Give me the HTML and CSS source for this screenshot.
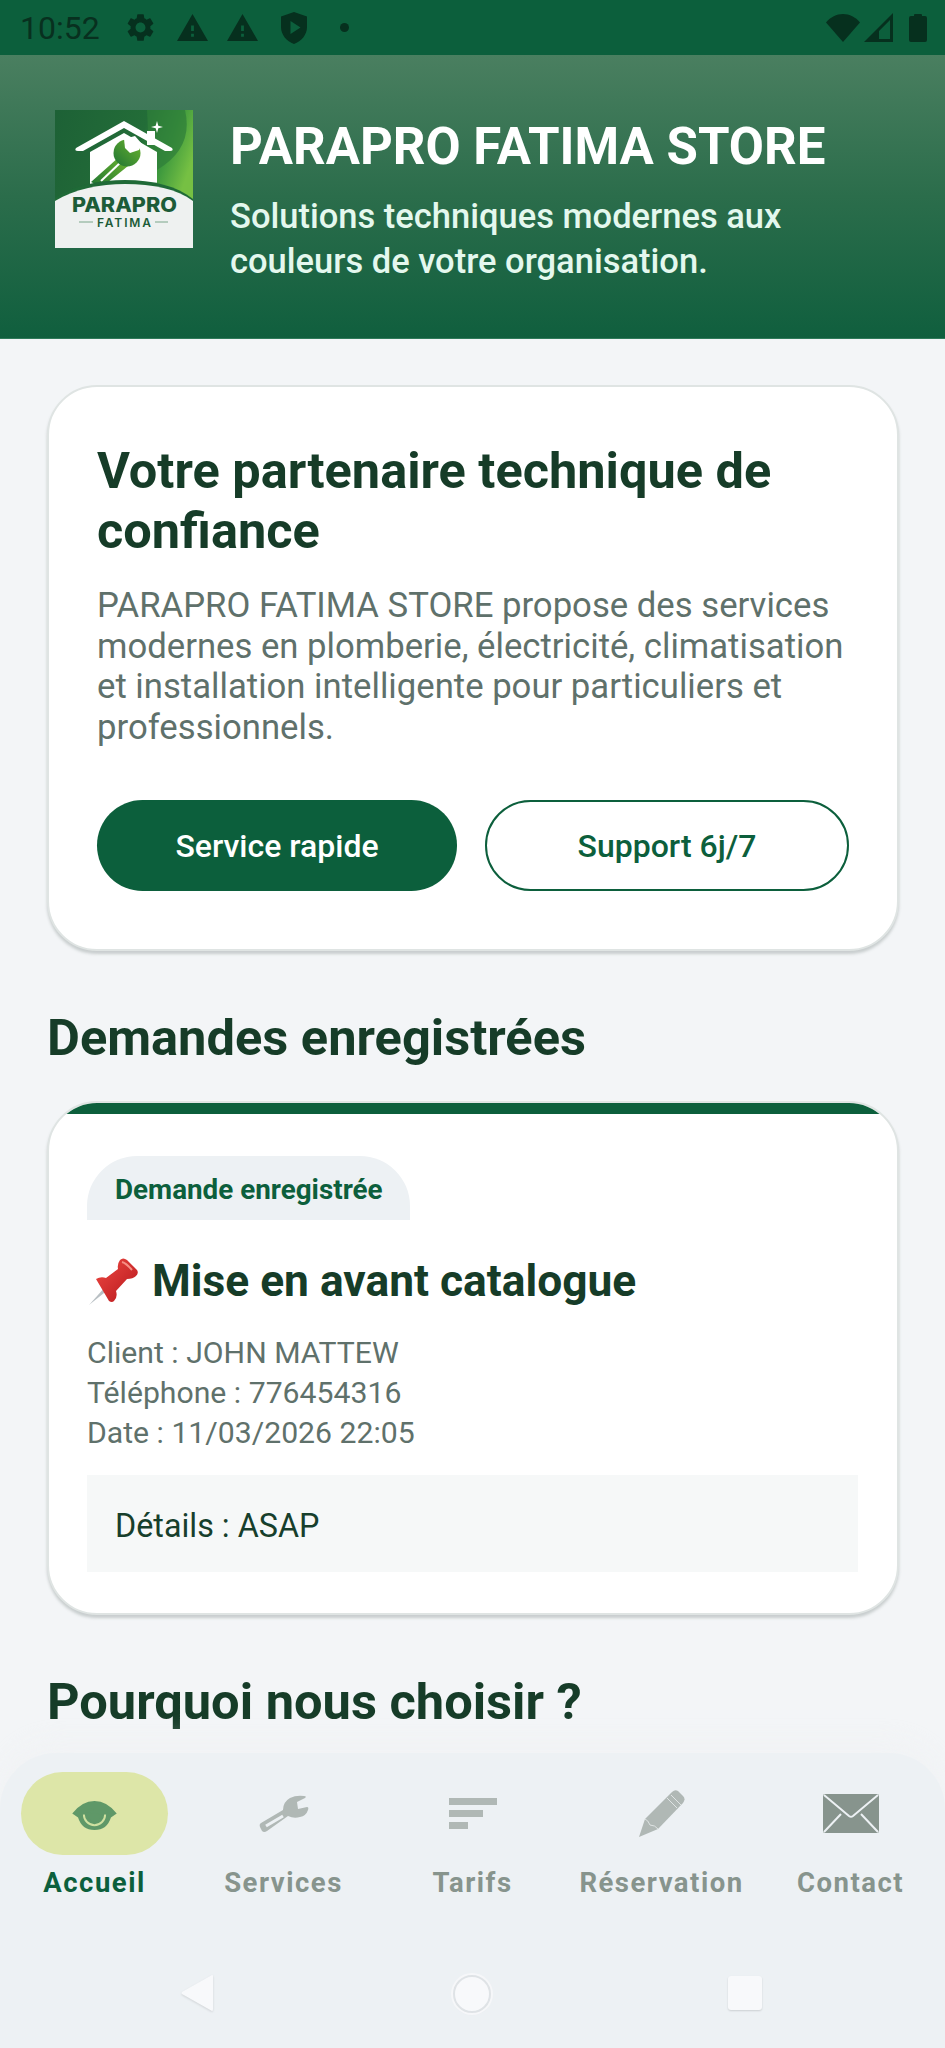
FILE: index.html
```html
<!DOCTYPE html>
<html lang="fr">
<head>
<meta charset="utf-8">
<title>PARAPRO FATIMA STORE</title>
<link rel="stylesheet" href="styles.css">
</head>
<body>
<div class="app">
  <div class="status">
    <span class="time">10:52</span>
    <svg class="si gear" viewBox="0 0 24 24"><path d="M19.14 12.94c.04-.3.06-.61.06-.94 0-.32-.02-.64-.07-.94l2.03-1.58a.49.49 0 0 0 .12-.61l-1.92-3.32a.488.488 0 0 0-.59-.22l-2.39.96c-.5-.38-1.03-.7-1.62-.94l-.36-2.54a.484.484 0 0 0-.48-.41h-3.84c-.24 0-.43.17-.47.41l-.36 2.54c-.59.24-1.13.57-1.62.94l-2.39-.96c-.22-.08-.47 0-.59.22L2.74 8.87c-.12.21-.08.47.12.61l2.03 1.58c-.05.3-.09.63-.09.94s.02.64.07.94l-2.03 1.58a.49.49 0 0 0-.12.61l1.92 3.32c.12.22.37.29.59.22l2.39-.96c.5.38 1.03.7 1.62.94l.36 2.54c.05.24.24.41.48.41h3.84c.24 0 .44-.17.47-.41l.36-2.54c.59-.24 1.13-.56 1.62-.94l2.39.96c.22.08.47 0 .59-.22l1.92-3.32c.12-.22.07-.47-.12-.61l-2.01-1.58zM12 15.6c-1.98 0-3.6-1.62-3.6-3.6s1.62-3.6 3.6-3.6 3.6 1.62 3.6 3.6-1.62 3.6-3.6 3.6z"/></svg>
    <svg class="si warn" viewBox="1 2 22 19"><path d="M1 21h22L12 2 1 21zm12-3h-2v-2h2v2zm0-4h-2v-4h2v4z"/></svg>
    <svg class="si warn warn2" viewBox="1 2 22 19"><path d="M1 21h22L12 2 1 21zm12-3h-2v-2h2v2zm0-4h-2v-4h2v4z"/></svg>
    <svg class="si shield" viewBox="0 0 26 32"><path d="M13 0 26 4.500V15c0 8-5.500 14-13 17C5.500 29 0 23 0 15V4.500zM9.500 9v13l10-6.500z" fill-rule="evenodd"/></svg>
    <span class="dot"></span>
    <span class="status-gap"></span>
    <svg class="si wifi" viewBox="0 0 34 28"><path d="M17 28 0 8.500C4.500 3 10.500 0 17 0s12.500 3 17 8.500z"/></svg>
    <svg class="si signal" viewBox="0 0 29 29"><path d="M29 0v29H0zM26 7 15 18v8h11z" fill-rule="evenodd"/></svg>
    <svg class="si batt" viewBox="0 0 18 29"><path d="M5 2q0-1 1-1h6q1 0 1 1v1h3q2 0 2 2v22q0 2-2 2H2q-2 0-2-2V5q0-2 2-2h3z"/></svg>
  </div>

  <header class="top">
    <svg class="logo" viewBox="0 0 138 138">
      <defs>
        <linearGradient id="lg" x1="0" y1="0" x2="1" y2="0.35">
          <stop offset="0" stop-color="#1d6136"/>
          <stop offset="0.62" stop-color="#236d38"/>
          <stop offset="0.82" stop-color="#3f9a3e"/>
          <stop offset="1" stop-color="#76c043"/>
        </linearGradient>
        <linearGradient id="wg" x1="0" y1="1" x2="1" y2="0">
          <stop offset="0" stop-color="#1f7434"/>
          <stop offset="1" stop-color="#6cb52d"/>
        </linearGradient>
      </defs>
      <rect width="138" height="138" fill="url(#lg)"/>
      <path d="M92 0h38q9 38-28 60l-8 6V40z" fill="#2f7f3a" opacity=".75"/>
      <path d="M35 42 69 23l33 19v36H35z" fill="#fff"/>
      <path d="M92 21h8v14h-8z" fill="#fff"/>
      <path d="M69 11 117 38q2 3-2 3h-5L69 18 28 41h-5q-4 0-2-3z" fill="#fff"/>
      <path d="M102 11l1.300 4.700 4.700 1.300-4.700 1.300-1.300 4.700-1.300-4.700-4.700-1.300 4.700-1.300z" fill="#fff"/>
      <path d="M36 72 64 47l9 9-26 21z" fill="url(#wg)"/>
      <path d="M46 71 66 52" stroke="#fff" stroke-width="2" fill="none"/>
      <circle cx="72" cy="43" r="13.500" fill="url(#wg)"/>
      <path d="M69 29l1 9 5 5 9-3 3-6-7-8z" fill="#fff"/>
      <path d="M0 88C20 75 45 70 70 70c28 0 52 6 68 19v49H0z" fill="#1f6a37"/>
      <path d="M0 91C20 79 45 74 70 74c28 0 52 5 68 17v47H0z" fill="#eef1f0"/>
      <text class="logo-t1" x="17" y="102" textLength="105" lengthAdjust="spacingAndGlyphs">PARAPRO</text>
      <text class="logo-t2" x="42" y="117" textLength="54">FATIMA</text>
      <path d="M24 112h14M100 112h13" stroke="#7aa68a" stroke-width="1"/>
    </svg>
    <div class="brand">
      <h1>PARAPRO FATIMA STORE</h1>
      <p>Solutions techniques modernes aux couleurs de votre organisation.</p>
    </div>
  </header>

  <main class="content">
    <section class="card hero">
      <h2>Votre partenaire technique de confiance</h2>
      <p>PARAPRO FATIMA STORE propose des services modernes en plomberie, électricité, climatisation et installation intelligente pour particuliers et professionnels.</p>
      <div class="actions">
        <span class="btn primary">Service rapide</span>
        <span class="btn outline">Support 6j/7</span>
      </div>
    </section>

    <h2 class="section">Demandes enregistrées</h2>

    <section class="card req">
      <div class="req-bar"></div>
      <div class="req-body">
        <span class="badge">Demande enregistrée</span>
        <h3>
          <svg class="pin" viewBox="0 0 52 50">
            <defs>
              <linearGradient id="pg" x1="0" y1="0" x2="1" y2="1">
                <stop offset="0" stop-color="#ef4a43"/>
                <stop offset="1" stop-color="#b5161b"/>
              </linearGradient>
            </defs>
            <path d="M1 49 18 30l3 3z" fill="#b9c0c4"/>
            <path d="M8 23q5-3 10-1l12-9q-1-5 2-9 3-3 7 0l10 10q2 3-1 6-3 3-9 3L28 35q2 6-2 10-2 2-5 0z" fill="url(#pg)"/>
            <path d="M34 6q4 1 10 8" stroke="#f68f85" stroke-width="2" fill="none"/>
          </svg>
          <span>Mise en avant catalogue</span>
        </h3>
        <p class="meta">Client : JOHN MATTEW<br>Téléphone : 776454316<br>Date : 11/03/2026 22:05</p>
        <div class="details">Détails : ASAP</div>
      </div>
    </section>

    <h2 class="section second">Pourquoi nous choisir ?</h2>
  </main>

  <nav class="nav">
    <div class="tabs">
      <div class="tab active">
        <span class="ico-wrap">
          <svg class="ico eye" viewBox="0 0 46 30"><path d="M0 13Q10 0 23 0t23 13l-6 4q-4 13-17 13T6 17z" fill="#5f9868"/><path d="M12 14a11 11 0 0 0 22 0" fill="none" stroke="#cfe0a0" stroke-width="2"/><path d="M15 12a8 8 0 0 0 16 2" fill="#5f9868" stroke="#5f9868"/><path d="M15 12q2-4 7-3" fill="none" stroke="#5f9868" stroke-width="2"/></svg>
        </span>
        <span class="lbl">Accueil</span>
      </div>
      <div class="tab">
        <span class="ico-wrap">
          <svg class="ico wrench" viewBox="0 0 50 38"><path d="M2 28 24 15q0-8 7-12 6-3 14-2 3 0 1 2l-8 4 1 7 9-2q2 0 1 3-2 6-8 7-6 2-12-1L8 36q-3 2-5 0l-2-4q-1-3 1-4z" fill="#b0b8b5"/><path d="M7 31 24 21" stroke="#edf1f4" stroke-width="3" fill="none"/></svg>
        </span>
        <span class="lbl">Services</span>
      </div>
      <div class="tab">
        <span class="ico-wrap">
          <svg class="ico bars" viewBox="0 0 48 31"><path d="M0 0h48v7H0zM0 12h34v7H0zM0 24h19v7H0z" fill="#b0b8b5"/></svg>
        </span>
        <span class="lbl">Tarifs</span>
      </div>
      <div class="tab">
        <span class="ico-wrap">
          <svg class="ico pencil" viewBox="0 0 46 47"><path d="M0 47 6 29 33 2q3-3 6-1l5 5q3 3 0 7L19 39z" fill="#b0b8b5"/><path d="M28 8l10 10M32 5l10 10M6 29q3 1 5 6 5 0 8 4" fill="none" stroke="#dfe4e4" stroke-width="1"/></svg>
        </span>
        <span class="lbl">Réservation</span>
      </div>
      <div class="tab">
        <span class="ico-wrap">
          <svg class="ico mail" viewBox="0 0 56 39"><rect width="56" height="39" rx="2" fill="#87948d"/><path d="M1 1l25 21q2 1.500 4 0L55 1M1 38l17-18M55 38 38 20" fill="none" stroke="#edf1f4" stroke-width="2"/></svg>
        </span>
        <span class="lbl">Contact</span>
      </div>
    </div>
    <div class="sysnav">
      <svg class="back" viewBox="0 0 34 40"><path d="M32 2 2 19q-1 1 0 2l30 17q1 0 1-2V3q0-1-1-1z"/></svg>
      <span class="home"></span>
      <span class="recent"></span>
    </div>
  </nav>
</div>
</body>
</html>
```
FILE: styles.css
```css
* { box-sizing: border-box; }
html, body { margin: 0; padding: 0; }
body { font-family: Roboto, "Liberation Sans", sans-serif; background: #f3f5f7; }
h1, h2, h3, p { margin: 0; }

.app { width: 945px; height: 2048px; display: flex; flex-direction: column; overflow: hidden; }

/* status bar */
.status { flex: 0 0 55px; height: 55px; background: #0c5f3c; display: flex; align-items: center; padding: 0 18px 0 20px; }
.time { font-size: 32px; color: #08301f; width: 78px; line-height: 1; }
.si { fill: #06301e; display: block; flex: none; }
.gear { width: 33px; height: 33px; margin-left: 26px; }
.warn { width: 31px; height: 27px; margin-left: 20px; }
.warn2 { margin-left: 19px; }
.shield { width: 26px; height: 32px; margin-left: 23px; }
.dot { width: 9px; height: 9px; border-radius: 50%; background: #06301e; margin-left: 33px; }
.status-gap { flex: 1; }
.wifi { width: 34px; height: 28px; }
.signal { width: 29px; height: 29px; margin-left: 4px; }
.batt { width: 18px; height: 29px; margin-left: 16px; }

/* header */
.top { flex: 0 0 284px; height: 284px; background: linear-gradient(180deg, #4a7f60 0%, #2b6d4b 50%, #105f3e 100%); border-bottom: 1px solid #2f7a5a; display: flex; align-items: flex-start; padding: 55px 40px 0 55px; gap: 37px; }
.logo { width: 138px; height: 138px; flex: none; display: block; }
.logo-t1 { font-family: Inter, Roboto, sans-serif; font-weight: 800; font-size: 19.500px; fill: #1c5c38; }
.logo-t2 { font-family: Inter, Roboto, sans-serif; font-weight: 600; font-size: 12px; fill: #1c5c38; }
.brand { padding-top: 9px; }
.brand h1 { font-size: 51px; line-height: 55px; font-weight: 700; color: #fff; white-space: nowrap; }
.brand p { font-size: 34.500px; font-weight: 500; line-height: 45px; color: #e4f8ee; margin-top: 20px; width: 640px; }

/* content */
.content { flex: 1; min-height: 0; overflow: hidden; padding: 46px 46px 0 47px; }
.card { background: #fff; border: 2px solid #dfe4e3; border-radius: 50px; box-shadow: 0 3px 3px rgba(90,105,100,.28); overflow: hidden; }
.hero { height: 566px; padding: 54px 48px 0 48px; }
.hero h2 { font-size: 50.500px; line-height: 60px; font-weight: 700; color: #163c28; }
.hero p { font-size: 34.700px; line-height: 40.500px; color: #5f716b; margin-top: 24px; }
.actions { display: flex; gap: 28px; margin-top: 53px; }
.btn { flex: 1; height: 91px; border-radius: 46px; display: flex; align-items: center; justify-content: center; font-size: 32px; font-weight: 500; }
.primary { background: #0c5f3c; color: #fff; }
.outline { background: #fff; color: #0c5f3c; border: 2px solid #0c5f3c; }

.section { font-size: 50.600px; line-height: 60px; font-weight: 700; color: #163c28; margin-top: 57px; }
.second { margin-top: 57px; }

.req { height: 514px; margin-top: 33px; }
.req-bar { height: 11px; background: #0c5f3c; }
.req-body { padding: 42px 39px 0 38px; }
.badge { display: block; width: 323px; height: 64px; padding: 0 0 0 28px; background: #edf1f4; border-radius: 50px 50px 0 0; font-size: 27.800px; line-height: 68px; font-weight: 700; color: #0c5f3c; white-space: nowrap; }
.req h3 { display: flex; align-items: center; gap: 12px; font-size: 44.300px; line-height: 60px; font-weight: 700; color: #163c28; margin-top: 31px; }
.pin { width: 52px; height: 50px; flex: none; display: block; margin-left: 1px; }
.meta { font-size: 30.200px; line-height: 40px; color: #5f716b; margin-top: 22px; }
.details { height: 97px; margin-top: 22px; background: #f6f8f8; padding-left: 28px; font-size: 32.300px; line-height: 102px; color: #173f2c; }

/* bottom navigation */
.nav { flex: 0 0 295px; height: 295px; background: #edf1f4; border-radius: 56px 56px 0 0; box-shadow: 0 -12px 24px rgba(240,242,244,.6); display: flex; flex-direction: column; }
.tabs { display: grid; grid-template-columns: repeat(5, 1fr); padding: 19px 0 0; }
.tab { display: flex; flex-direction: column; align-items: center; }
.ico-wrap { width: 147px; height: 83px; border-radius: 42px; display: flex; align-items: center; justify-content: center; }
.active .ico-wrap { background: #dde6a8; }
.ico { display: block; }
.eye { width: 45px; height: 29px; margin-top: 3px; }
.wrench { width: 50px; height: 38px; margin-top: 1px; }
.bars { width: 48px; height: 31px; }
.pencil { width: 46px; height: 47px; }
.mail { width: 56px; height: 39px; }
.lbl { font-size: 27.500px; line-height: 30px; font-weight: 700; letter-spacing: 1.500px; color: #87948d; margin-top: 13px; white-space: nowrap; }
.active .lbl { color: #0c5f3c; }
.sysnav { flex: 1; position: relative; }
.back { position: absolute; left: 180px; top: 75px; width: 34px; height: 40px; fill: #f8f9fb; filter: drop-shadow(0 1px 1px rgba(0,0,0,.12)); }
.home { position: absolute; left: 453px; top: 77px; width: 38px; height: 38px; border-radius: 50%; background: #f8f9fb; border: 2px solid #dfe3e6; box-shadow: 0 0 0 2px #f6f7f9, 0 1px 2px rgba(0,0,0,.12); }
.recent { position: absolute; left: 728px; top: 78px; width: 34px; height: 34px; border-radius: 3px; background: #f8f9fb; box-shadow: 0 1px 2px rgba(0,0,0,.14); }
```
